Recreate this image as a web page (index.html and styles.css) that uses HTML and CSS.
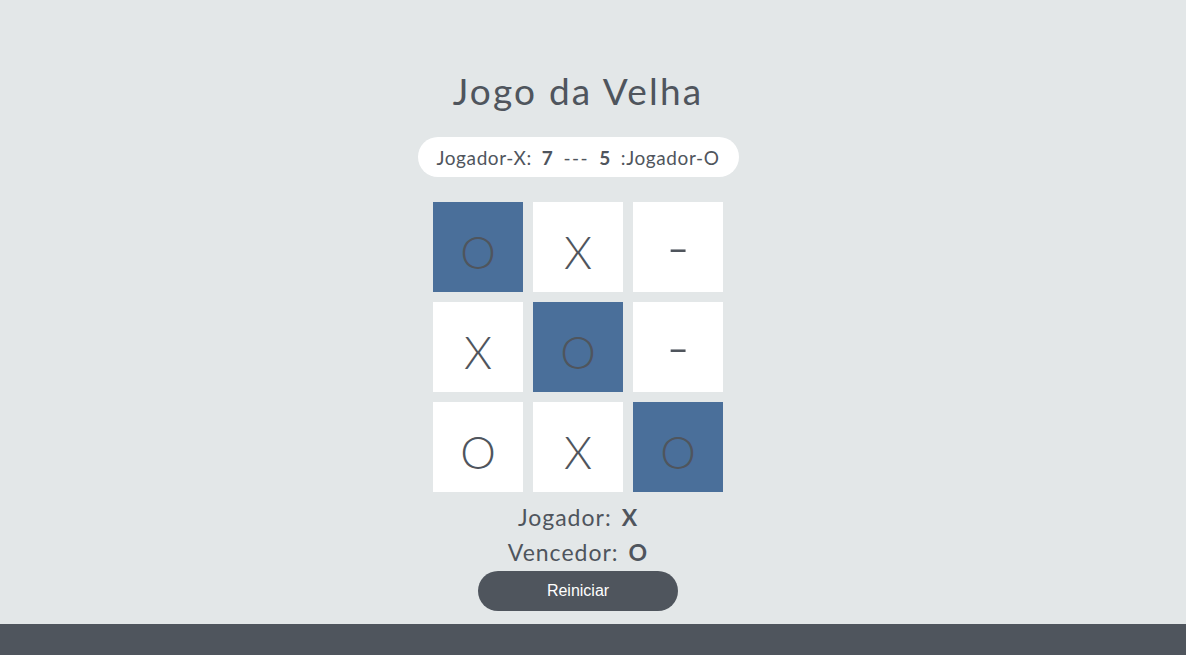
FILE: index.html
```html
<!DOCTYPE html>
<html lang="pt-BR">
<head>
<meta charset="utf-8">
<title>Jogo da Velha</title>
<link rel="stylesheet" href="styles.css">
</head>
<body>
<main class="game">
  <h1 class="title">Jogo da Velha</h1>
  <div class="score">
    <span class="player">Jogador-X:</span>
    <span class="num">7</span>
    <span class="sep">---</span>
    <span class="num">5</span>
    <span class="player">:Jogador-O</span>
  </div>
  <div class="board">
    <div class="cell win">O</div>
    <div class="cell">X</div>
    <div class="cell dash">-</div>
    <div class="cell">X</div>
    <div class="cell win">O</div>
    <div class="cell dash">-</div>
    <div class="cell">O</div>
    <div class="cell">X</div>
    <div class="cell win">O</div>
  </div>
  <div class="status first"><span class="label">Jogador:</span><b class="val">X</b></div>
  <div class="status"><span class="label">Vencedor:</span><b class="val">O</b></div>
  <button class="restart">Reiniciar</button>
</main>
<footer class="footer"></footer>
</body>
</html>
```
FILE: styles.css
```css
html, body {
  margin: 0;
  padding: 0;
}
body {
  background: #e3e7e8;
  color: #4f555d;
  font-family: Lato, "Noto Sans", sans-serif;
  height: 655px;
  display: flex;
  flex-direction: column;
}
.game {
  flex: 1;
  display: flex;
  flex-direction: column;
  align-items: center;
  padding-right: 30px;
}
.title {
  margin: 69px 0 0;
  font-size: 37px;
  font-weight: 400;
  line-height: 44px;
  letter-spacing: 2.2px;
}
.score {
  margin-top: 24px;
  height: 40px;
  width: 321px;
  box-sizing: border-box;
  background: #fff;
  border-radius: 20px;
  display: flex;
  align-items: center;
  justify-content: center;
  font-size: 19px;
  letter-spacing: 0.6px;
}
.score .num {
  font-weight: 700;
  margin: 0 10px;
}
.score .sep {
  letter-spacing: 1.5px;
}
.board {
  margin-top: 25px;
  display: grid;
  grid-template-columns: repeat(3, 90px);
  grid-auto-rows: 90px;
  gap: 10px;
}
.cell {
  background: #fff;
  display: flex;
  align-items: center;
  justify-content: center;
  font-size: 45px;
  font-weight: 300;
  padding-top: 10px;
  box-sizing: border-box;
}
.cell.win {
  background: #4a6f9a;
}
.cell.dash {
  font-size: 64px;
  font-weight: 300;
  padding-top: 0;
  padding-bottom: 4px;
}
.status {
  font-size: 23px;
  line-height: 35px;
  display: flex;
  gap: 10px;
  align-items: baseline;
  letter-spacing: 1px;
}
.status.first {
  margin-top: 8px;
}
.status .val {
  font-weight: 700;
}
.restart {
  margin-top: 1px;
  width: 200px;
  height: 40px;
  border: 0;
  border-radius: 20px;
  background: #4f555d;
  color: #fff;
  font-family: "Liberation Sans", Arial, sans-serif;
  font-size: 16px;
}
.footer {
  height: 31px;
  background: #4f555d;
}
```
